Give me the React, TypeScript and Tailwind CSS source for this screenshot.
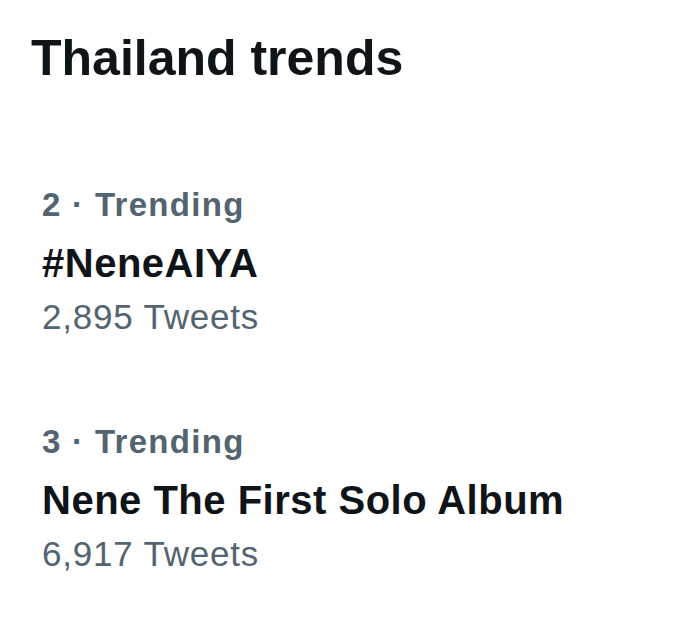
const trends = [
  { rank: 2, name: '#NeneAIYA', count: '2,895' },
  { rank: 3, name: 'Nene The First Solo Album', count: '6,917' },
];

export default function App() {
  return (
    <div className="min-h-[629px] w-[686px] bg-white font-['Liberation_Sans',Arial,sans-serif] text-[#0f1419]">
      <h2 className="pl-[31px] pt-7 text-[50px] font-bold leading-[60px]">Thailand trends</h2>
      <div className="mt-[97px] flex flex-col gap-[83px] pl-[42px]">
        {trends.map((t) => (
          <div key={t.rank}>
            <p className="text-[33px] font-bold leading-[40px] tracking-[1.3px] text-[#536471]">
              {t.rank} · Trending
            </p>
            <p className="mt-3 text-[40px] font-bold leading-[52px] tracking-[0.5px]">{t.name}</p>
            <p className="mt-1.5 text-[35px] leading-[44px] tracking-[0.8px] text-[#536471]">
              {t.count} Tweets
            </p>
          </div>
        ))}
      </div>
    </div>
  );
}
